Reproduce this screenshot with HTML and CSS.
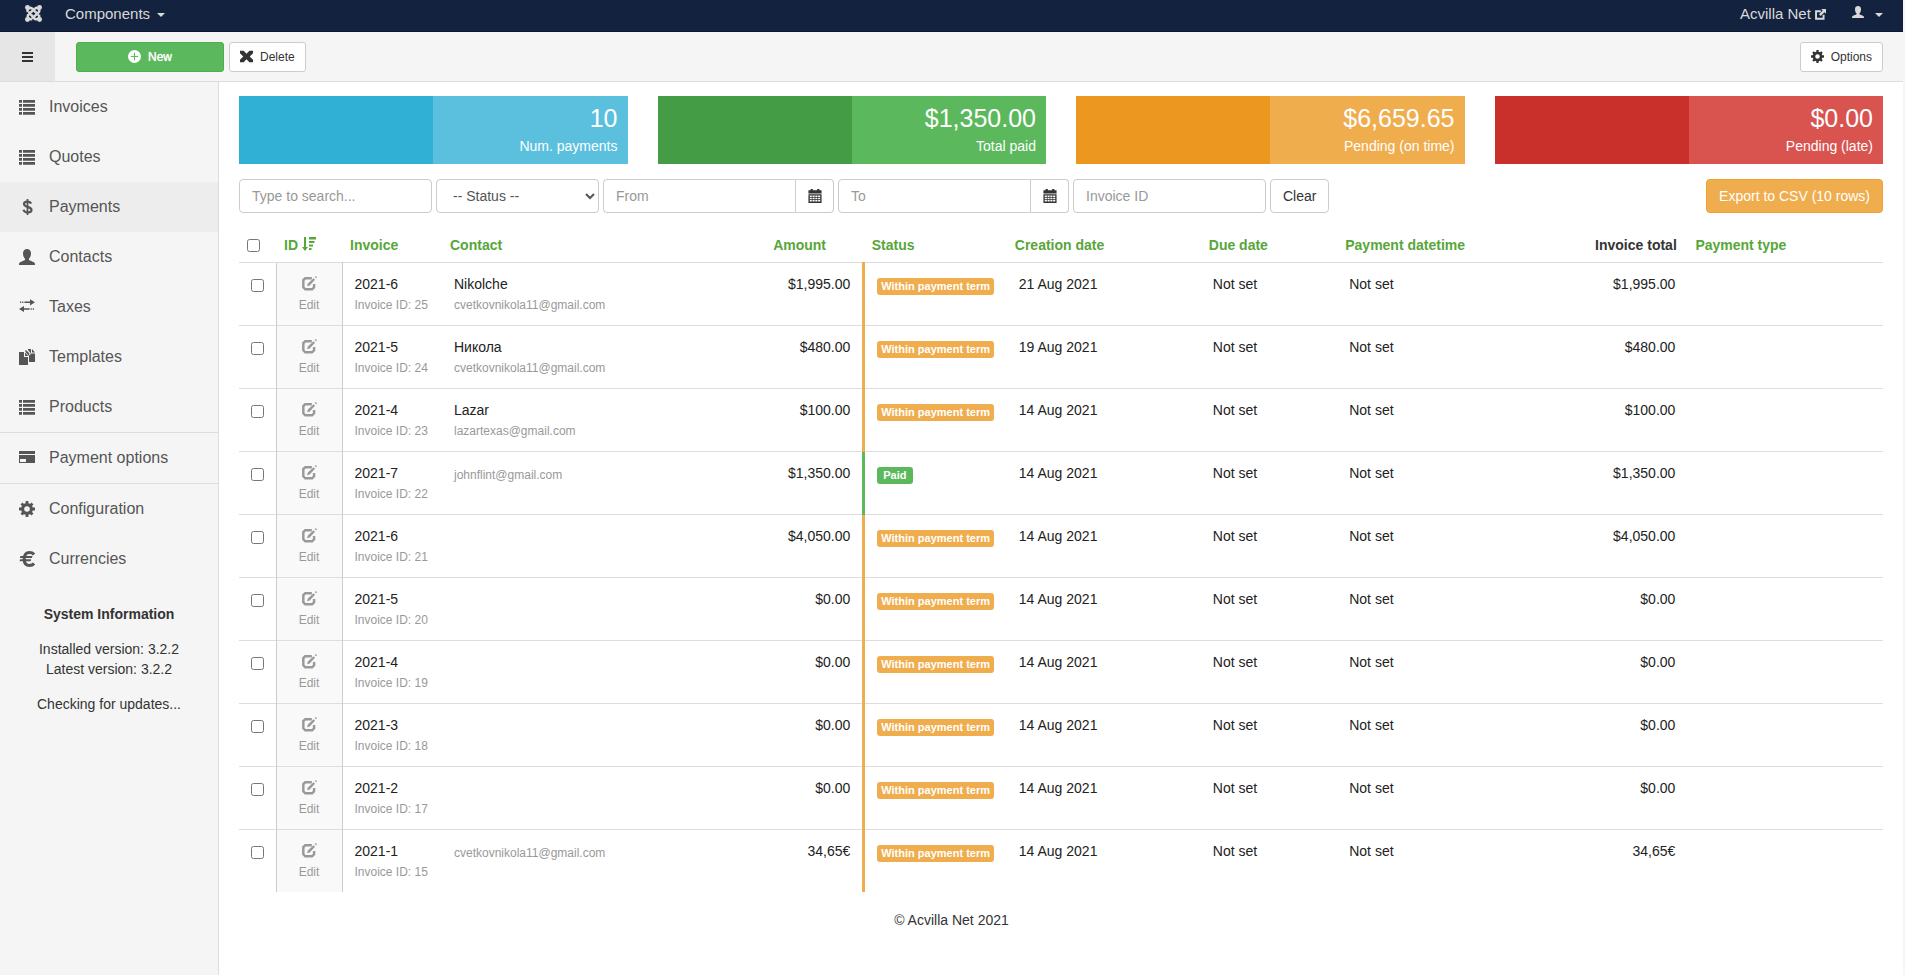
FILE: index.html
```
<!DOCTYPE html>
<html lang="en">
<head>
    <meta charset="UTF-8">
    <title>Payments</title>
    <link rel="stylesheet" href="styles.css">
</head>
<body>

<!-- icon set -->
<svg class="sprite" xmlns="http://www.w3.org/2000/svg">
    <symbol id="i-joomla" viewBox="0 0 16 16">
        <g fill="none" stroke="currentColor" stroke-width="2.4" stroke-linejoin="round">
            <path d="M2.500 6.500C1.800 4 4 1.800 6.500 3.200L12.800 9.500M9.500 3.200C12 1.800 14.200 4 13.200 6.500L6.500 12.800M13.200 9.500c1 2.500-1.200 4.700-3.700 3.700L3.200 6.500M6.500 13.200C4 14.200 1.800 12 2.800 9.500L9.500 3.200"/>
        </g>
        <circle cx="2.300" cy="2.300" r="2.300"/><circle cx="13.700" cy="2.300" r="2.300"/><circle cx="2.300" cy="13.700" r="2.300"/><circle cx="13.700" cy="13.700" r="2.300"/>
    </symbol>
    <symbol id="i-list" viewBox="0 0 16 16">
        <path d="M0 1h3v2.800H0zM4 1h12v2.800H4zM0 5h3v2.800H0zM4 5h12v2.800H4zM0 9h3v2.800H0zM4 9h12v2.800H4zM0 13h3v2.800H0zM4 13h12v2.800H4z"/>
    </symbol>
    <symbol id="i-dollar" viewBox="0 0 16 16">
        <path d="M12 4.700C11.500 3.300 10.200 2.600 8.300 2.600c-2 0-3.300.9-3.300 2.400 0 3.700 7.500 2 7.500 6 0 1.500-1.500 2.500-3.800 2.500-2.300 0-3.700-1-4.200-2.700" fill="none" stroke="currentColor" stroke-width="2.200"/>
        <path d="M7.600 0h1.800v16H7.600z"/>
    </symbol>
    <symbol id="i-user" viewBox="0 0 16 16">
        <path d="M8 0C5.600 0 4 1.700 4 4.200c0 2.300.8 4.400 2 5.500v1.300c-1 .8-3.500 1.300-5 2.300-.8.500-1 1.500-1 2.700h16c0-1.200-.2-2.200-1-2.700-1.500-1-4-1.500-5-2.300V9.700c1.200-1.100 2-3.200 2-5.500C12 1.700 10.400 0 8 0z"/>
    </symbol>
    <symbol id="i-swap" viewBox="0 0 16 16">
        <path d="M1 2.500h1.200v1.600H1zM3.200 2.500h1.200v1.600H3.200zM5.400 2.500H11V.200l5 3.100-5 3.100V4.100H5.400zM15 9.200h-1.200v1.600H15zM12.800 9.200h-1.200v1.600h1.200zM10.600 9.200H5V6.900L0 10l5 3.100v-2.300h5.600z"/>
    </symbol>
    <symbol id="i-copy" viewBox="0 0 16 16">
        <path d="M0 3h5v5h4v8H0zM6 3.500V7h3.200zM6.500 1H7l3.300 3.200v2L11.500 6V4L9 1V0h3v4.500h4V13h-6V7L6.500 3zM13 0l3 3.500h-3z"/>
    </symbol>
    <symbol id="i-card" viewBox="0 0 16 16">
        <path d="M0 1h16v3H0z"/><path fill-rule="evenodd" d="M0 5h16v8H0zM1 9v3h6V9z"/>
    </symbol>
    <symbol id="i-cog" viewBox="0 0 16 16">
        <circle cx="8" cy="8" r="4.400" fill="none" stroke="currentColor" stroke-width="3.200"/>
        <path d="M8 0v3M0 8h3M2.500 2.500l2 2M13.500 2.500l-2 2M8 16v-3M16 8h-3M13.500 13.500l-2-2M2.500 13.500l2-2" fill="none" stroke="currentColor" stroke-width="2.800"/>
    </symbol>
    <symbol id="i-euro" viewBox="0 0 16 16">
        <path d="M15 3.500C13.800 2 12.500 1.500 10.500 1.500 7 1.500 5.200 4 5.200 8s1.800 6.500 5.300 6.500c2 0 3.300-.5 4.500-2" fill="none" stroke="currentColor" stroke-width="3"/>
        <path d="M1.500 5h12l-.6 2H.8zM1.200 8.300h11l-.6 2H.500z"/>
    </symbol>
    <symbol id="i-menu" viewBox="0 0 11 10">
        <path d="M0 0h11v2H0zM0 4h11v2H0zM0 8h11v2H0z"/>
    </symbol>
    <symbol id="i-plus" viewBox="0 0 16 16">
        <path fill-rule="evenodd" d="M8 0a8 8 0 1 0 0 16A8 8 0 0 0 8 0zM7.300 3.500h1.400v3.800h3.800v1.400H8.700v3.800H7.300V8.700H3.500V7.300h3.800z"/>
    </symbol>
    <symbol id="i-remove" viewBox="0 0 16 16">
        <path d="M0 1h4.500L8 4.500 11.500 1H16v3l-4 4 4 4v3h-4.500L8 11.500 4.500 15H0v-3l4-4-4-4z"/>
    </symbol>
    <symbol id="i-external" viewBox="0 0 16 16">
        <path d="M8.500 3.300H1.500v11h11V8.500" fill="none" stroke="currentColor" stroke-width="2.800"/>
        <path d="M9 0h7v7l-2.300-2.300-5.400 5.600-2.600-2.600 5.500-5.500z"/>
    </symbol>
    <symbol id="i-calendar" viewBox="0 0 16 16">
        <path d="M3 0h2.500v1.500h5V0H13v1.500h2.500V5H.5V1.500H3z"/>
        <path fill-rule="evenodd" d="M.5 6h15v10H.5zM2 7.500v1.600h2.400V7.500zM5.200 7.500v1.600h2.400V7.500zM8.400 7.500v1.600h2.400V7.500zM11.600 7.500v1.600H14V7.500zM2 10.100v1.600h2.400v-1.600zM5.200 10.100v1.600h2.400v-1.600zM8.400 10.100v1.600h2.400v-1.600zM11.600 10.100v1.600H14v-1.600zM2 12.700v1.600h2.400v-1.600zM5.200 12.700v1.600h2.400v-1.600zM8.400 12.700v1.600h2.400v-1.600zM11.600 12.700v1.600H14v-1.600z"/>
    </symbol>
    <symbol id="i-edit" viewBox="0 0 16 16">
        <path d="M10.500 2.300H3.500L1.400 4.400v7.700l2.100 2.100h7.300l2.100-2.100V8.500" fill="none" stroke="currentColor" stroke-width="2.600"/>
        <path d="M12.300 2.400l1.600 1.600-5.700 6-2.800.8.800-2.700zM14.800 0L16 1.200l-1 1.200L13.600 1z"/>
    </symbol>
    <symbol id="i-sort" viewBox="0 0 14 14">
        <path d="M2 0h2v10h2l-3 4-3-4h2zM7 0h7v2.500H7zM7 4h5.500v2H7zM7 7.500h4v2H7zM7 11h2.500v2H7z"/>
    </symbol>
</svg>

<nav class="navbar">
    <a href="#" class="brand" aria-label="Control panel"><svg class="icon icon-brand"><use href="#i-joomla"/></svg></a>
    <a href="#" class="nav-link">Components <span class="caret"></span></a>
    <div class="nav-right">
        <a href="#">Acvilla Net <svg class="icon icon-ext"><use href="#i-external"/></svg></a>
        <a href="#" class="user-link" aria-label="User menu"><svg class="icon icon-user"><use href="#i-user"/></svg><span class="caret"></span></a>
    </div>
</nav>

<header class="toolbar">
    <button type="button" class="menu-toggle" aria-label="Toggle menu"><svg class="icon icon-menu"><use href="#i-menu"/></svg></button>
    <button type="button" class="btn btn-small btn-new"><svg class="icon"><use href="#i-plus"/></svg>New</button>
    <button type="button" class="btn btn-small"><svg class="icon"><use href="#i-remove"/></svg>Delete</button>
    <button type="button" class="btn btn-small btn-options"><svg class="icon"><use href="#i-cog"/></svg>Options</button>
</header>

<div class="layout">
    <aside class="sidebar">
        <a href="#"><svg class="icon"><use href="#i-list"/></svg>Invoices</a>
        <a href="#"><svg class="icon"><use href="#i-list"/></svg>Quotes</a>
        <a href="#" class="active"><svg class="icon"><use href="#i-dollar"/></svg>Payments</a>
        <a href="#"><svg class="icon"><use href="#i-user"/></svg>Contacts</a>
        <a href="#"><svg class="icon"><use href="#i-swap"/></svg>Taxes</a>
        <a href="#"><svg class="icon"><use href="#i-copy"/></svg>Templates</a>
        <a href="#"><svg class="icon"><use href="#i-list"/></svg>Products</a>
        <a href="#" class="divider"><svg class="icon"><use href="#i-card"/></svg>Payment options</a>
        <a href="#" class="divider"><svg class="icon"><use href="#i-cog"/></svg>Configuration</a>
        <a href="#"><svg class="icon"><use href="#i-euro"/></svg>Currencies</a>
        <div class="system-info">
            <p><strong>System Information</strong></p>
            <p>Installed version: 3.2.2<br>Latest version: 3.2.2</p>
            <p>Checking for updates...</p>
        </div>
    </aside>

    <main class="content">
        <section class="stats">
            <div class="stat stat-blue"><div class="stat-body"><div class="stat-value">10</div><div>Num. payments</div></div></div>
            <div class="stat stat-green"><div class="stat-body"><div class="stat-value">$1,350.00</div><div>Total paid</div></div></div>
            <div class="stat stat-orange"><div class="stat-body"><div class="stat-value">$6,659.65</div><div>Pending (on time)</div></div></div>
            <div class="stat stat-red"><div class="stat-body"><div class="stat-value">$0.00</div><div>Pending (late)</div></div></div>
        </section>

        <form class="filters">
            <input type="text" class="control" placeholder="Type to search..." aria-label="Search">
            <select class="control" aria-label="Status">
                <option>-- Status --</option>
                <option>Within payment term</option>
                <option>Paid</option>
            </select>
            <div class="input-group">
                <input type="text" class="control" placeholder="From" aria-label="From">
                <button type="button" aria-label="Pick from date"><svg class="icon"><use href="#i-calendar"/></svg></button>
            </div>
            <div class="input-group">
                <input type="text" class="control" placeholder="To" aria-label="To">
                <button type="button" aria-label="Pick to date"><svg class="icon"><use href="#i-calendar"/></svg></button>
            </div>
            <input type="text" class="control" placeholder="Invoice ID" aria-label="Invoice ID">
            <button type="button" class="btn">Clear</button>
            <button type="button" class="btn btn-export">Export to CSV (10 rows)</button>
        </form>

        <table class="payments">
            <thead>
                <tr>
                    <th class="col-check"><input type="checkbox" aria-label="Select all"></th>
                    <th class="col-id"><a href="#">ID <svg class="icon icon-sort"><use href="#i-sort"/></svg></a></th>
                    <th class="col-invoice"><a href="#">Invoice</a></th>
                    <th><a href="#">Contact</a></th>
                    <th class="col-amount"><a href="#">Amount</a></th>
                    <th class="col-status"><a href="#">Status</a></th>
                    <th class="col-created"><a href="#">Creation date</a></th>
                    <th class="col-due"><a href="#">Due date</a></th>
                    <th class="col-paid"><a href="#">Payment datetime</a></th>
                    <th class="col-total">Invoice total</th>
                    <th class="col-type"><a href="#">Payment type</a></th>
                </tr>
            </thead>
            <tbody>
                <tr>
                    <td><input type="checkbox" aria-label="Select 25"></td>
                    <td class="edit"><a href="#"><svg class="icon"><use href="#i-edit"/></svg>Edit</a></td>
                    <td>2021-6<small>Invoice ID: 25</small></td>
                    <td>Nikolche<small>cvetkovnikola11@gmail.com</small></td>
                    <td class="money">$1,995.00</td>
                    <td class="status pending"><span class="label">Within payment term</span></td>
                    <td>21 Aug 2021</td>
                    <td>Not set</td>
                    <td>Not set</td>
                    <td class="money">$1,995.00</td>
                    <td></td>
                </tr>
                <tr>
                    <td><input type="checkbox" aria-label="Select 24"></td>
                    <td class="edit"><a href="#"><svg class="icon"><use href="#i-edit"/></svg>Edit</a></td>
                    <td>2021-5<small>Invoice ID: 24</small></td>
                    <td>Никола<small>cvetkovnikola11@gmail.com</small></td>
                    <td class="money">$480.00</td>
                    <td class="status pending"><span class="label">Within payment term</span></td>
                    <td>19 Aug 2021</td>
                    <td>Not set</td>
                    <td>Not set</td>
                    <td class="money">$480.00</td>
                    <td></td>
                </tr>
                <tr>
                    <td><input type="checkbox" aria-label="Select 23"></td>
                    <td class="edit"><a href="#"><svg class="icon"><use href="#i-edit"/></svg>Edit</a></td>
                    <td>2021-4<small>Invoice ID: 23</small></td>
                    <td>Lazar<small>lazartexas@gmail.com</small></td>
                    <td class="money">$100.00</td>
                    <td class="status pending"><span class="label">Within payment term</span></td>
                    <td>14 Aug 2021</td>
                    <td>Not set</td>
                    <td>Not set</td>
                    <td class="money">$100.00</td>
                    <td></td>
                </tr>
                <tr>
                    <td><input type="checkbox" aria-label="Select 22"></td>
                    <td class="edit"><a href="#"><svg class="icon"><use href="#i-edit"/></svg>Edit</a></td>
                    <td>2021-7<small>Invoice ID: 22</small></td>
                    <td><small class="email-only">johnflint@gmail.com</small></td>
                    <td class="money">$1,350.00</td>
                    <td class="status paid"><span class="label">Paid</span></td>
                    <td>14 Aug 2021</td>
                    <td>Not set</td>
                    <td>Not set</td>
                    <td class="money">$1,350.00</td>
                    <td></td>
                </tr>
                <tr>
                    <td><input type="checkbox" aria-label="Select 21"></td>
                    <td class="edit"><a href="#"><svg class="icon"><use href="#i-edit"/></svg>Edit</a></td>
                    <td>2021-6<small>Invoice ID: 21</small></td>
                    <td></td>
                    <td class="money">$4,050.00</td>
                    <td class="status pending"><span class="label">Within payment term</span></td>
                    <td>14 Aug 2021</td>
                    <td>Not set</td>
                    <td>Not set</td>
                    <td class="money">$4,050.00</td>
                    <td></td>
                </tr>
                <tr>
                    <td><input type="checkbox" aria-label="Select 20"></td>
                    <td class="edit"><a href="#"><svg class="icon"><use href="#i-edit"/></svg>Edit</a></td>
                    <td>2021-5<small>Invoice ID: 20</small></td>
                    <td></td>
                    <td class="money">$0.00</td>
                    <td class="status pending"><span class="label">Within payment term</span></td>
                    <td>14 Aug 2021</td>
                    <td>Not set</td>
                    <td>Not set</td>
                    <td class="money">$0.00</td>
                    <td></td>
                </tr>
                <tr>
                    <td><input type="checkbox" aria-label="Select 19"></td>
                    <td class="edit"><a href="#"><svg class="icon"><use href="#i-edit"/></svg>Edit</a></td>
                    <td>2021-4<small>Invoice ID: 19</small></td>
                    <td></td>
                    <td class="money">$0.00</td>
                    <td class="status pending"><span class="label">Within payment term</span></td>
                    <td>14 Aug 2021</td>
                    <td>Not set</td>
                    <td>Not set</td>
                    <td class="money">$0.00</td>
                    <td></td>
                </tr>
                <tr>
                    <td><input type="checkbox" aria-label="Select 18"></td>
                    <td class="edit"><a href="#"><svg class="icon"><use href="#i-edit"/></svg>Edit</a></td>
                    <td>2021-3<small>Invoice ID: 18</small></td>
                    <td></td>
                    <td class="money">$0.00</td>
                    <td class="status pending"><span class="label">Within payment term</span></td>
                    <td>14 Aug 2021</td>
                    <td>Not set</td>
                    <td>Not set</td>
                    <td class="money">$0.00</td>
                    <td></td>
                </tr>
                <tr>
                    <td><input type="checkbox" aria-label="Select 17"></td>
                    <td class="edit"><a href="#"><svg class="icon"><use href="#i-edit"/></svg>Edit</a></td>
                    <td>2021-2<small>Invoice ID: 17</small></td>
                    <td></td>
                    <td class="money">$0.00</td>
                    <td class="status pending"><span class="label">Within payment term</span></td>
                    <td>14 Aug 2021</td>
                    <td>Not set</td>
                    <td>Not set</td>
                    <td class="money">$0.00</td>
                    <td></td>
                </tr>
                <tr>
                    <td><input type="checkbox" aria-label="Select 15"></td>
                    <td class="edit"><a href="#"><svg class="icon"><use href="#i-edit"/></svg>Edit</a></td>
                    <td>2021-1<small>Invoice ID: 15</small></td>
                    <td><small class="email-only">cvetkovnikola11@gmail.com</small></td>
                    <td class="money">34,65€</td>
                    <td class="status pending"><span class="label">Within payment term</span></td>
                    <td>14 Aug 2021</td>
                    <td>Not set</td>
                    <td>Not set</td>
                    <td class="money">34,65€</td>
                    <td></td>
                </tr>
            </tbody>
        </table>
    </main>
</div>

<!-- centred on the window, not on the content column -->
<footer class="footer">© Acvilla Net 2021</footer>

</body>
</html>
```
FILE: styles.css
```
* { box-sizing: border-box; }
body { margin: 0; min-height: 100vh; font-family: "Liberation Sans", Arial, sans-serif; font-size: 14px; line-height: 20px; color: #333; background: #fff; border-right: 2px solid #f5f5f5; display: grid; grid-template-rows: auto auto 1fr; }
a { text-decoration: none; color: inherit; }
button, input, select { font: inherit; color: inherit; margin: 0; }
button { cursor: pointer; }
.sprite { display: none; }
.icon { width: 16px; height: 16px; flex: none; fill: currentColor; }
.caret { display: inline-block; border-top: 4px solid; border-left: 4px solid transparent; border-right: 4px solid transparent; vertical-align: middle; margin-left: 3px; }

/* top bar */
.navbar { display: flex; height: 32px; padding: 0 20px 4px 25px; align-items: center; font-size: 15px; color: #d9d9d9; background: #13223e; border-bottom: 1px solid #0c182e; }
.brand { display: flex; margin-right: 23px; }
.icon-brand { width: 17px; height: 17px; }
.nav-right { display: flex; align-items: center; gap: 26px; margin-left: auto; }
.icon-ext { width: 11px; height: 11px; vertical-align: -1px; }
.icon-user { width: 12px; height: 12px; margin-right: 8px; vertical-align: 1px; }

/* toolbar */
.toolbar { display: flex; align-items: center; height: 50px; padding-right: 20px; background: #f5f5f5; border-bottom: 1px solid #ddd; }
.menu-toggle { align-self: stretch; width: 55px; margin-right: 21px; padding: 0; border: 0; background: #e6e6e6; }
.icon-menu { width: 11px; height: 10px; }
.btn { height: 34px; padding: 0 12px; border: 1px solid #ccc; border-radius: 4px; background: #fff; }
.btn-small { display: flex; align-items: center; justify-content: center; gap: 7px; height: 30px; padding: 0 10px; font-size: 12px; border-radius: 3px; }
.btn-small .icon { width: 13px; height: 13px; }
.btn-new { width: 148px; margin-right: 5px; color: #fff; background: #5cb85c; border-color: #4cae4c; text-shadow: 0 0 1px #fff; }
.btn-options { margin-left: auto; }

/* sidebar */
.layout { display: flex; grid-row: 3; grid-column: 1; }
.sidebar { flex: none; width: 219px; background: #f5f5f5; border-right: 1px solid #ddd; }
.sidebar > a { display: flex; align-items: center; gap: 14px; height: 50px; padding-left: 19px; font-size: 16px; color: #555; }
.sidebar > .active { background: #ededed; }
.sidebar > .divider { height: 51px; border-top: 1px solid #ddd; }
.system-info { padding: 20px 10px; text-align: center; }
.system-info p { margin: 0 0 15px; }

/* summary tiles */
.content { flex: 1; min-width: 0; padding: 14px 20px 60px; }
.stats { display: grid; grid-template-columns: repeat(4, 1fr); gap: 30px; color: #fff; }
.stat { display: flex; justify-content: flex-end; }
.stat-body { width: 50%; height: 68px; padding: 5px 10px 0; text-align: right; }
.stat-value { font-size: 25px; line-height: 35px; }
.stat-blue { background: #31b0d5; }
.stat-blue .stat-body { background: #5bc0de; }
.stat-green { background: #449d44; }
.stat-green .stat-body { background: #5cb85c; }
.stat-orange { background: #ec971f; }
.stat-orange .stat-body { background: #f0ad4e; }
.stat-red { background: #c9302c; }
.stat-red .stat-body { background: #d9534f; }

/* filters */
.filters { display: flex; gap: 4px; margin: 15px 0; }
.control { width: 193px; height: 34px; padding: 0 12px; color: #555; background: #fff; border: 1px solid #ccc; border-radius: 4px; }
.control::placeholder { color: #999; }
select.control { width: 163px; }
.input-group { display: flex; }
.input-group .control { border-radius: 4px 0 0 4px; }
.input-group button { display: flex; align-items: center; justify-content: center; width: 38px; padding: 0; border: 1px solid #ccc; border-left: 0; border-radius: 0 4px 4px 0; background: #fff; }
.input-group .icon { width: 14px; height: 14px; }
.btn-export { margin-left: auto; color: #fff; background: #f0ad4e; border-color: #eea236; }

/* payments table */
.payments { width: 100%; table-layout: fixed; border-collapse: collapse; }
.payments th { height: 34px; padding: 0 8px; text-align: left; vertical-align: middle; white-space: nowrap; }
.payments th a { color: #57a639; }
.payments td { height: 63px; padding: 11px 12px 0; vertical-align: top; border-top: 1px solid #ddd; color: #222; }
.payments input { display: block; width: 13px; height: 13px; }
.payments th input { margin-top: 2px; }
.payments td input { margin-top: 5px; }
.payments small { display: block; font-size: 12px; line-height: 22px; color: #999; }
.payments .email-only { display: inline; line-height: 24px; }
.col-check { width: 37px; }
.col-id { width: 66px; }
.col-invoice { width: 100px; }
.col-amount { width: 6%; }
.col-status { width: 8.7%; }
.col-created { width: 11.8%; }
.col-due { width: 8.3%; }
.col-paid { width: 15.2%; }
.col-total { width: 6.1%; }
.col-type { width: 11.9%; }
.icon-sort { width: 14px; height: 14px; vertical-align: -1px; }
.payments .edit { padding: 13px 0 0; background: #f9f9f9; border-left: 1px solid #ccc; border-right: 1px solid #ccc; }
.edit a { display: flex; flex-direction: column; align-items: center; gap: 4px; font-size: 12px; line-height: 20px; color: #999; }
.edit .icon { width: 15px; height: 15px; }
.payments .money { text-align: right; }
.payments .status { border-left: 3px solid #f0ad4e; }
.payments .paid { border-left-color: #5cb85c; }
.label { display: block; width: fit-content; margin-top: 4px; padding: 0 4px; border-radius: 3px; font-size: 11px; font-weight: bold; line-height: 17px; color: #fff; background: #f0ad4e; white-space: nowrap; }
.paid .label { padding: 0 6px; background: #5cb85c; }

.footer { grid-row: 3; grid-column: 1; align-self: end; padding-bottom: 45px; text-align: center; }
```
